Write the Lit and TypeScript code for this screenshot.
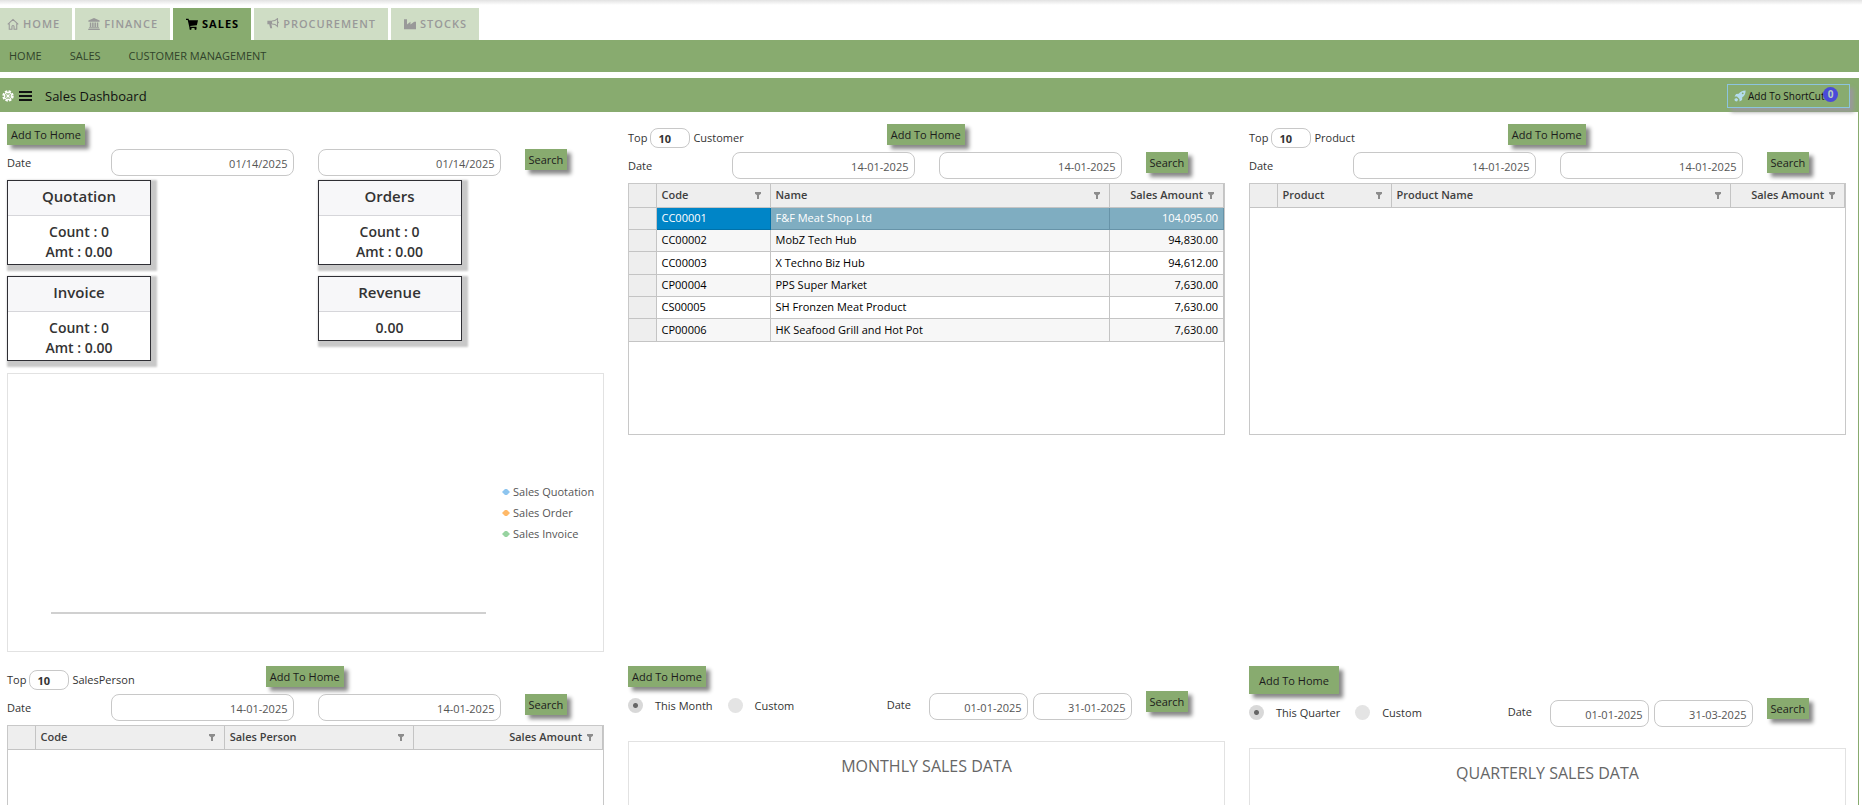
import { LitElement, html, css, svg, nothing } from "lit";
import { customElement, state } from "lit/decorators.js";
import { classMap } from "lit/directives/class-map.js";

interface Column {
  title: string;
  kind?: "num";
  wide?: boolean;
}

const icons = {
  home: svg`<path d="M1 8.4 8 1.8l7 6.6M3 7.4V15h3.6v-3.6a1.4 1.4 0 0 1 2.8 0V15H13V7.4" fill="none" stroke="currentColor" stroke-width="1.4"/>`,
  bank: svg`<path d="M8 0 0.5 3.4V5h15V3.4zM2.4 6h2v6h-2zM5.5 6h2v6h-2zM8.6 6h2v6h-2zM11.7 6h2v6h-2zM1.4 12.4h13.2v1.3H1.4zM0.3 14.2h15.4V16H0.3z" fill="currentColor"/>`,
  cart: svg`<path d="M0 1h3.4l.6 2h12l-1.5 6.6-8.9.9.3 1.3H14v1.4H4.700L2.300 2.600H0z" fill="currentColor"/><circle cx="6" cy="14.400" r="1.500" fill="currentColor"/><circle cx="12.700" cy="14.400" r="1.500" fill="currentColor"/>`,
  horn: svg`<path d="M0.500 3.600h6.200v4.600H5.800l1.200 5.300H4.300L3 8.200H.5z" fill="currentColor"/><path d="M6.700 3.900c3 0 5.600-1.500 7.300-3.200v10.400c-1.700-1.800-4.300-3-7.300-3" fill="none" stroke="currentColor" stroke-width="1.400"/><path d="M14 4.200a1.600 1.600 0 0 1 0 3.200z" fill="currentColor"/>`,
  industry: svg`<path d="M0 1.500h4v7.200l4.600-3.600v3.600l5-3.600H16V15H0z" fill="currentColor"/>`,
  gear: svg`<circle cx="8" cy="8" r="6.300" fill="none" stroke="currentColor" stroke-width="2.600" stroke-dasharray="3.200 1.750"/><circle cx="8" cy="8" r="4.800" fill="none" stroke="currentColor" stroke-width="1.500"/><circle cx="8" cy="8" r="1.700" fill="currentColor"/><path d="M8 3v10M3 8h10M4.500 4.500l7 7M11.500 4.500l-7 7" stroke="currentColor" stroke-width=".9"/>`,
  rocket: svg`<path d="M15.500.5c-4.500 0-7.300 1.700-9.300 4.500L2.800 5.200.700 8.600l3.300.1 3.300 3.300.1 3.300 3.400-2.100.2-3.400C13.800 7.800 15.500 5 15.500.5zM11.600 3.200a1.200 1.200 0 1 1 0 2.400 1.200 1.200 0 0 1 0-2.400z" fill="currentColor" fill-rule="evenodd"/><path d="M3.200 10.500 0.600 12l.6 2.800 2.800.6 1.500-2.600z" fill="currentColor"/>`,
};

const icon = (shape: unknown, cls = "icon") =>
  html`<svg class=${cls} viewBox="0 0 16 16" aria-hidden="true">${shape}</svg>`;

const funnel = html`<svg class="funnel" viewBox="0 0 6 7" aria-hidden="true">
  <path d="M0 0h6v1.800L4 3.200V7H2V3.200L0 1.800z" fill="#8c8c8c" />
</svg>`;

@customElement("app-root")
export class AppRoot extends LitElement {
  static styles = css`
    :host {
      display: flex;
      flex-direction: column;
      height: 100vh;
      overflow: hidden;
      background: #fff;
      color: #333;
      font: 11px/16px "Open Sans", "Noto Sans", sans-serif;
    }
    * {
      box-sizing: border-box;
    }
    button,
    input {
      font: inherit;
      margin: 0;
    }
    a {
      color: inherit;
      text-decoration: none;
    }
    .edge {
      flex: none;
      height: 8px;
      background: linear-gradient(#e2e2e2, #fff 5px);
    }
    .tabs {
      flex: none;
      display: flex;
      gap: 3px;
    }
    .tab {
      display: flex;
      align-items: center;
      gap: 4px;
      height: 32px;
      padding: 0 12px 0 13px;
      background: #cfddc5;
      color: #999;
      font-weight: 600;
      letter-spacing: 1px;
    }
    .tab:first-child {
      padding-left: 7px;
    }
    .tab.active {
      background: #88ab6f;
      color: #000;
      font-weight: 700;
    }
    .icon {
      width: 12px;
      height: 12px;
      flex: none;
    }
    .menu {
      flex: none;
      display: flex;
      align-items: center;
      gap: 28px;
      height: 32px;
      margin-right: 3px;
      padding-left: 9px;
      background: #88ab6f;
      color: #30432a;
      font-weight: 500;
    }
    .titlebar {
      flex: none;
      display: flex;
      align-items: center;
      height: 34px;
      margin: 6px 3px 0 0;
      padding: 1px 9px 0 2px;
      background: #88ab6f;
      color: #111;
    }
    .gear {
      width: 12px;
      height: 12px;
      color: #fff;
    }
    .burger {
      display: grid;
      gap: 2px;
      width: 13px;
      margin: 0 13px 0 5px;
      padding: 0;
      border: 0;
      background: none;
    }
    .burger i {
      height: 2px;
      background: #111;
    }
    h1 {
      flex: 1;
      margin: 0;
      font-size: 13px;
      font-weight: 400;
    }
    .shortcut {
      position: relative;
      display: flex;
      align-items: center;
      gap: 2px;
      width: 123px;
      height: 24px;
      padding: 0 6px;
      border: 1px solid #8cc4de;
      background: #88ab6f;
      box-shadow: 4px 4px 4px #999;
      color: #111;
      font-size: 10px;
      white-space: nowrap;
    }
    .shortcut .icon {
      color: #b4dcee;
    }
    .badge {
      position: absolute;
      right: 11px;
      top: 2px;
      width: 15px;
      height: 15px;
      border-radius: 50%;
      background: #4a4ad8;
      color: #b8ccc0;
      font-weight: 700;
      line-height: 15px;
      text-align: center;
    }
    .board {
      flex: 1;
      min-height: 0;
      overflow-y: auto;
      scrollbar-width: none;
      display: grid;
      grid-template-columns: repeat(3, minmax(0, 1fr));
      align-content: start;
      gap: 14px 24px;
      margin-right: 3px;
      padding: 12px 12px 12px 7px;
      border-right: 1px solid #88ab6f;
    }
    .widget {
      display: flex;
      flex-direction: column;
      gap: 4px;
    }
    .line {
      display: grid;
      grid-template-columns: repeat(12, minmax(0, 1fr));
      column-gap: 24px;
      align-items: start;
    }
    .btn {
      justify-self: start;
      align-self: start;
      height: 21px;
      padding: 0 4px;
      border: 0;
      background: #88ab6f;
      box-shadow: 4px 4px 4px #888;
      color: #1c1c1c;
      line-height: 21px;
      white-space: nowrap;
    }
    .btn.roomy {
      height: 28px;
      padding: 0 10px;
    }
    .top {
      grid-column: span 5;
      display: flex;
      align-items: center;
      gap: 3px;
      padding-top: 4px;
    }
    .count {
      width: 40px;
      height: 20px;
      padding: 0 7px;
      border: 1px solid #c8c8c8;
      border-radius: 8px;
      color: #333;
      font-weight: 700;
    }
    .caption {
      grid-column: span 2;
      align-self: center;
    }
    .date {
      grid-column: span 4;
      width: 100%;
      min-width: 0;
      height: 27px;
      padding: 1px 5px 0;
      border: 1px solid #c8c8c8;
      border-radius: 8px;
      background: #fff;
      color: #555;
      text-align: right;
    }
    .search {
      grid-column: span 2;
    }
    .cards {
      display: grid;
      grid-template-columns: 1fr 1fr;
      align-items: start;
      gap: 11px 24px;
    }
    .card {
      width: 144px;
      border: 1px solid #2e2e34;
      background: #fff;
      box-shadow: 3px 3px 2px 3px #c8c8c8;
      text-align: center;
      font-size: 14px;
      font-weight: 600;
      line-height: 20px;
    }
    .card h2 {
      margin: 0;
      padding-bottom: 3px;
      border-bottom: 1px solid #d6d6da;
      background: #f7f7f9;
      font-size: 15px;
      font-weight: 600;
      line-height: 31px;
    }
    .card div {
      padding: 6px 0 2px;
    }
    .card p {
      margin: 0;
    }
    .panel {
      border: 1px solid #e2e2e2;
      height: 279px;
    }
    .chart {
      display: flex;
      margin-top: 8px;
    }
    .plot {
      flex: 1;
      margin: 0 16px 37px 43px;
      border-bottom: 2px solid #d0d0d0;
    }
    .legend {
      align-self: center;
      width: 101px;
      margin: 0;
      padding: 0;
      list-style: none;
      color: #555;
      line-height: 21px;
      white-space: nowrap;
    }
    .legend li {
      display: flex;
      align-items: center;
      gap: 3px;
    }
    .diamond {
      width: 8px;
      height: 8px;
    }
    .grid {
      height: 252px;
      border: 1px solid #c8c8c8;
    }
    table {
      width: 100%;
      border-collapse: collapse;
      table-layout: fixed;
      color: #000;
    }
    th,
    td {
      height: 22px;
      padding: 0 5px;
      border: 0 solid #c4c4c4;
      border-width: 0 1px 1px 0;
      text-align: left;
      line-height: 16px;
      white-space: nowrap;
    }
    th {
      height: 23px;
      background: #eee;
      color: #3f3f3f;
      font-weight: 600;
    }
    tr:nth-child(3n) td {
      height: 23px;
    }
    tbody tr:nth-child(even) td {
      background: #f7f7f7;
    }
    tbody tr td.handle {
      background: #eee;
    }
    .num {
      text-align: right;
    }
    .handle {
      width: 27px;
    }
    .fixed {
      width: 114px;
    }
    .head {
      display: flex;
      align-items: center;
      justify-content: space-between;
      gap: 5px;
      padding-right: 4px;
    }
    .num .head {
      justify-content: flex-end;
    }
    .funnel {
      width: 6px;
      height: 7px;
      flex: none;
    }
    tr.selected td {
      background: #7fadc1;
      border-color: #6793a8;
      color: #fff;
    }
    tr.selected td.handle {
      border-color: #c4c4c4;
    }
    tr.selected td.current {
      background: #0085c7;
      border-color: #0071a9;
    }
    .period {
      min-height: 29px;
      margin-bottom: 17px;
    }
    .choices {
      grid-column: span 5;
      align-self: center;
      display: flex;
      align-items: center;
      white-space: nowrap;
    }
    .choices label {
      display: flex;
      align-items: center;
      gap: 12px;
      margin-right: 15px;
    }
    input[type="radio"] {
      appearance: none;
      flex: none;
      width: 15px;
      height: 15px;
      border-radius: 50%;
      background: #e4e4e4;
    }
    input[type="radio"]:checked {
      background: radial-gradient(circle, #666 2px, #d8d8d8 3px);
    }
    .range {
      grid-column: span 5;
      display: flex;
      align-items: center;
      gap: 5px;
      margin-right: -10px;
      padding-top: 2px;
    }
    .range label {
      flex: 0 0 37px;
      padding-bottom: 4px;
    }
    .range .date {
      flex: 1;
    }
    .panel h2 {
      margin: 12px 0 0;
      color: #666;
      font-size: 16px;
      font-weight: 400;
      line-height: 24px;
      text-align: center;
    }
  `;

  @state() private active = "SALES";

  private tabs: [string, unknown][] = [
    ["HOME", icons.home],
    ["FINANCE", icons.bank],
    ["SALES", icons.cart],
    ["PROCUREMENT", icons.horn],
    ["STOCKS", icons.industry],
  ];

  private customers = [
    ["CC00001", "F&F Meat Shop Ltd", "104,095.00"],
    ["CC00002", "MobZ Tech Hub", "94,830.00"],
    ["CC00003", "X Techno Biz Hub", "94,612.00"],
    ["CP00004", "PPS Super Market", "7,630.00"],
    ["CS00005", "SH Fronzen Meat Product", "7,630.00"],
    ["CP00006", "HK Seafood Grill and Hot Pot", "7,630.00"],
  ];

  private dateLine(id: string, from: string, to: string) {
    return html`<div class="line">
      <label class="caption" for="${id}-from">Date</label>
      <input class="date" id="${id}-from" .value=${from} />
      <input class="date" aria-label="Date to" .value=${to} />
      <button class="btn search">Search</button>
    </div>`;
  }

  private topLine(id: string, noun: string) {
    return html`<div class="line">
      <div class="top">
        <label for="${id}-top">Top</label>
        <input class="count" id="${id}-top" .value=${"10"} />
        <span>${noun}</span>
      </div>
      <button class="btn">Add To Home</button>
    </div>`;
  }

  private dataGrid(columns: Column[], rows: string[][], even = false) {
    return html`<div class="grid">
      <table>
        <thead>
          <tr>
            <th class="handle"></th>
            ${columns.map(
              (c) => html`<th class=${classMap({ num: c.kind === "num", fixed: !even && !c.wide })}>
                <div class="head"><span>${c.title}</span>${funnel}</div>
              </th>`
            )}
          </tr>
        </thead>
        <tbody>
          ${rows.map(
            (row, r) => html`<tr class=${r === 0 ? "selected" : nothing}>
              <td class="handle"></td>
              ${row.map(
                (cell, i) =>
                  html`<td class=${classMap({ current: r === 0 && i === 0, num: columns[i].kind === "num" })}>${cell}</td>`
              )}
            </tr>`
          )}
        </tbody>
      </table>
    </div>`;
  }

  private topList(id: string, noun: string, columns: Column[], rows: string[][], even = false) {
    return html`<section class="widget">
      ${this.topLine(id, noun)} ${this.dateLine(id, "14-01-2025", "14-01-2025")}
      ${this.dataGrid(columns, rows, even)}
    </section>`;
  }

  private card(title: string, lines: string[]) {
    return html`<article class="card">
      <h2>${title}</h2>
      <div>${lines.map((l) => html`<p>${l}</p>`)}</div>
    </article>`;
  }

  private period(id: string, current: string, from: string, to: string, title: string, roomy = false) {
    return html`<section class="widget">
      <div class="line">
        <button class=${classMap({ btn: true, roomy })}>Add To Home</button>
      </div>
      <div class="line period">
        <div class="choices">
          <label><input type="radio" name=${id} checked />${current}</label>
          <label><input type="radio" name=${id} />Custom</label>
        </div>
        <div class="range">
          <label for="${id}-from">Date</label>
          <input class="date" id="${id}-from" .value=${from} />
          <input class="date" aria-label="Date to" .value=${to} />
        </div>
        <button class="btn search">Search</button>
      </div>
      <div class="panel"><h2>${title}</h2></div>
    </section>`;
  }

  render() {
    const legend = [
      ["Sales Quotation", "#8ec5ef"],
      ["Sales Order", "#ffb968"],
      ["Sales Invoice", "#97d3a0"],
    ];
    return html`
      <div class="edge"></div>
      <nav class="tabs">
        ${this.tabs.map(
          ([name, shape]) => html`<a
            href="#"
            class=${classMap({ tab: true, active: name === this.active })}
            @click=${(e: Event) => {
              e.preventDefault();
              this.active = name;
            }}
            >${icon(shape)}${name}</a
          >`
        )}
      </nav>
      <nav class="menu">
        <a href="#">HOME</a><a href="#">SALES</a><a href="#">CUSTOMER MANAGEMENT</a>
      </nav>
      <header class="titlebar">
        ${icon(icons.gear, "gear")}
        <button class="burger" aria-label="Menu"><i></i><i></i><i></i></button>
        <h1>Sales Dashboard</h1>
        <button class="shortcut">${icon(icons.rocket)}Add To ShortCut<span class="badge">0</span></button>
      </header>
      <main class="board">
        <section class="widget">
          <button class="btn home">Add To Home</button>
          ${this.dateLine("summary", "01/14/2025", "01/14/2025")}
          <div class="cards">
            ${this.card("Quotation", ["Count : 0", "Amt : 0.00"])}
            ${this.card("Orders", ["Count : 0", "Amt : 0.00"])}
            ${this.card("Invoice", ["Count : 0", "Amt : 0.00"])}
            ${this.card("Revenue", ["0.00"])}
          </div>
          <div class="panel chart">
            <div class="plot"></div>
            <ul class="legend">
              ${legend.map(
                ([name, color]) => html`<li>
                  <svg class="diamond" viewBox="0 0 8 8" aria-hidden="true">
                    <path d="M0 4 3 1h2l3 3-3 3H3z" fill=${color} /></svg
                  >${name}
                </li>`
              )}
            </ul>
          </div>
        </section>
        ${this.topList(
          "customer",
          "Customer",
          [{ title: "Code" }, { title: "Name", wide: true }, { title: "Sales Amount", kind: "num" }],
          this.customers
        )}
        ${this.topList(
          "product",
          "Product",
          [{ title: "Product" }, { title: "Product Name", wide: true }, { title: "Sales Amount", kind: "num" }],
          []
        )}
        ${this.topList(
          "person",
          "SalesPerson",
          [{ title: "Code" }, { title: "Sales Person" }, { title: "Sales Amount", kind: "num" }],
          [],
          true
        )}
        ${this.period("month", "This Month", "01-01-2025", "31-01-2025", "MONTHLY SALES DATA")}
        ${this.period("quarter", "This Quarter", "01-01-2025", "31-03-2025", "QUARTERLY SALES DATA", true)}
      </main>
    `;
  }
}
